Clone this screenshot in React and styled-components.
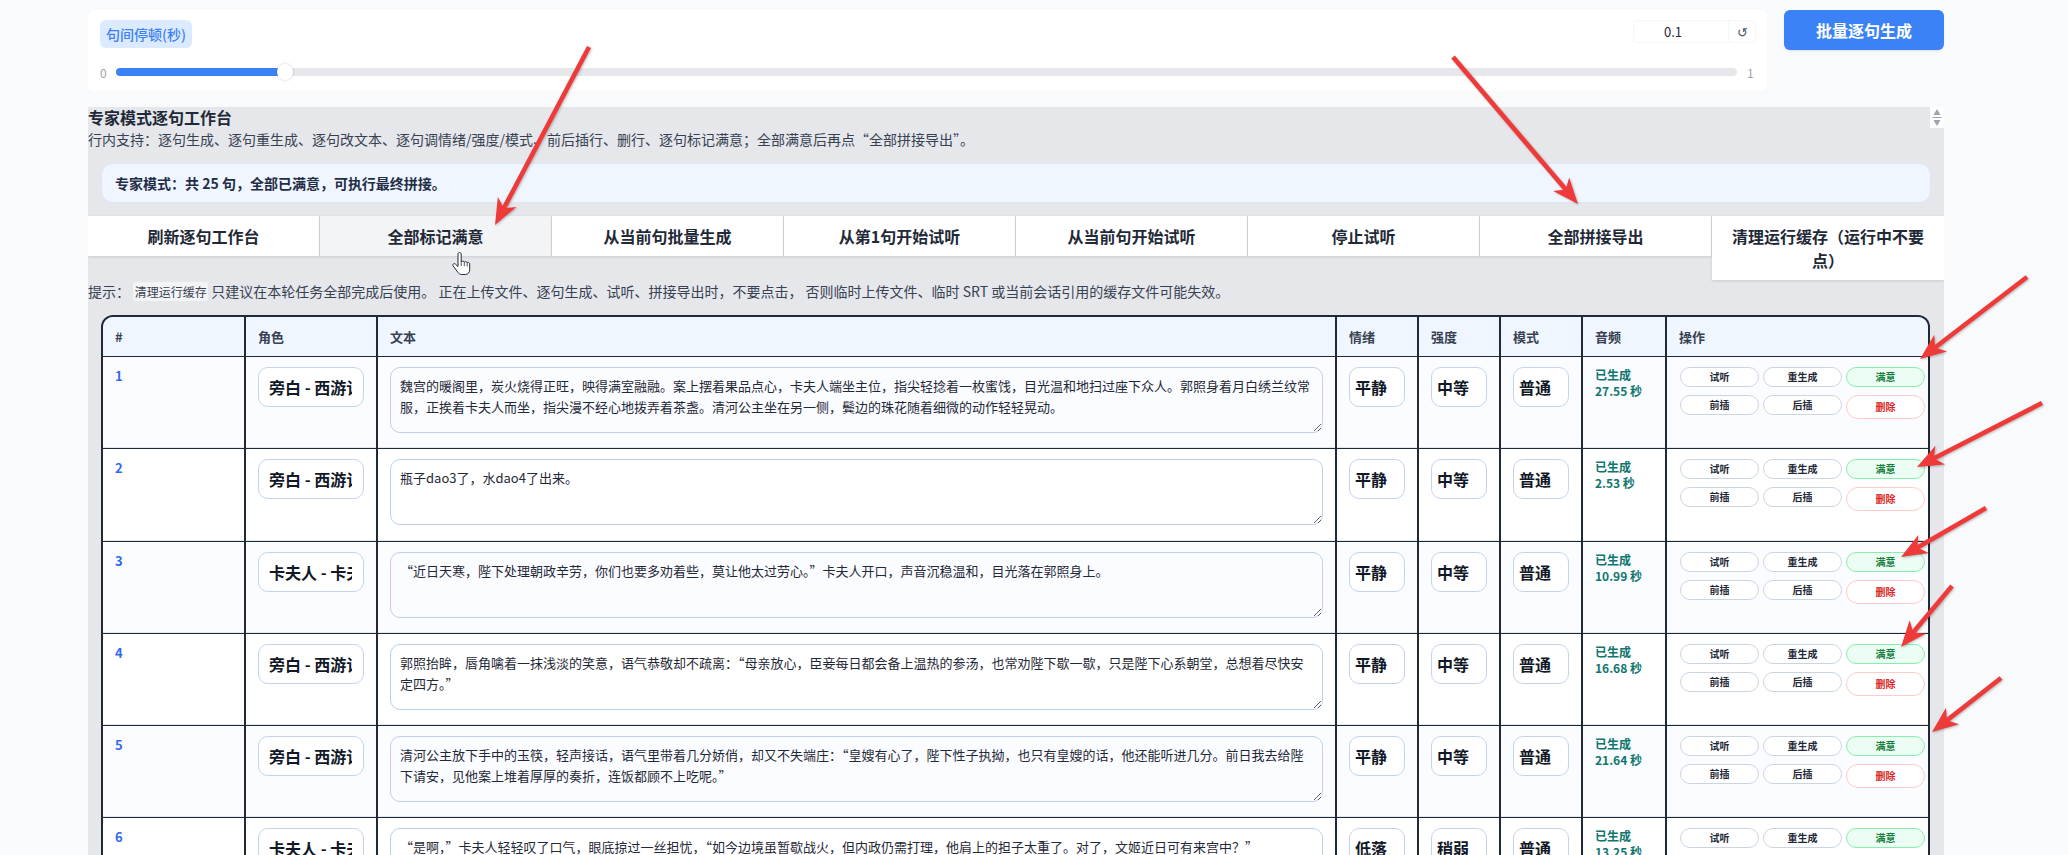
import React from 'react';
import styled, { createGlobalStyle } from 'styled-components';

const FONT = '"Noto Sans CJK SC", "Noto Sans", sans-serif';

const TOOLBAR = [
  '刷新逐句工作台',
  '全部标记满意',
  '从当前句批量生成',
  '从第1句开始试听',
  '从当前句开始试听',
  '停止试听',
  '全部拼接导出',
  '清理运行缓存（运行中不要点）',
];

const COLUMNS = [
  { title: '#', width: 143 },
  { title: '角色', width: 132 },
  { title: '文本', width: 959 },
  { title: '情绪', width: 82 },
  { title: '强度', width: 82 },
  { title: '模式', width: 82 },
  { title: '音频', width: 84 },
  { title: '操作', width: 261 },
];

const NARRATOR = '旁白 - 西游记旁白';
const KAFUREN = '卡夫人 - 卡夫人';

const ROWS = [
  {
    id: 1,
    role: NARRATOR,
    text: '魏宫的暖阁里，炭火烧得正旺，映得满室融融。案上摆着果品点心，卡夫人端坐主位，指尖轻捻着一枚蜜饯，目光温和地扫过座下众人。郭照身着月白绣兰纹常服，正挨着卡夫人而坐，指尖漫不经心地拨弄着茶盏。清河公主坐在另一侧，鬓边的珠花随着细微的动作轻轻晃动。',
    emotion: '平静',
    strength: '中等',
    seconds: '27.55',
  },
  {
    id: 2,
    role: NARRATOR,
    text: '瓶子dao3了，水dao4了出来。',
    emotion: '平静',
    strength: '中等',
    seconds: '2.53',
  },
  {
    id: 3,
    role: KAFUREN,
    text: '“近日天寒，陛下处理朝政辛劳，你们也要多劝着些，莫让他太过劳心。”卡夫人开口，声音沉稳温和，目光落在郭照身上。',
    emotion: '平静',
    strength: '中等',
    seconds: '10.99',
  },
  {
    id: 4,
    role: NARRATOR,
    text: '郭照抬眸，唇角噙着一抹浅淡的笑意，语气恭敬却不疏离：“母亲放心，臣妾每日都会备上温热的参汤，也常劝陛下歇一歇，只是陛下心系朝堂，总想着尽快安定四方。”',
    emotion: '平静',
    strength: '中等',
    seconds: '16.68',
  },
  {
    id: 5,
    role: NARRATOR,
    text: '清河公主放下手中的玉筷，轻声接话，语气里带着几分娇俏，却又不失端庄：“皇嫂有心了，陛下性子执拗，也只有皇嫂的话，他还能听进几分。前日我去给陛下请安，见他案上堆着厚厚的奏折，连饭都顾不上吃呢。”',
    emotion: '平静',
    strength: '中等',
    seconds: '21.64',
  },
  {
    id: 6,
    role: KAFUREN,
    text: '“是啊，”卡夫人轻轻叹了口气，眼底掠过一丝担忧，“如今边境虽暂歇战火，但内政仍需打理，他肩上的担子太重了。对了，文姬近日可有来宫中？”',
    emotion: '低落',
    strength: '稍弱',
    seconds: '13.25',
  },
];

const ARROWS = [
  [589, 47, 495, 225],
  [1453, 57, 1578, 204],
  [2027, 277, 1920, 359],
  [2042, 403, 1917, 467],
  [1986, 508, 1901, 557],
  [1952, 586, 1901, 647],
  [2001, 678, 1932, 732],
];

const Arrow = ({ from, to }) => {
  const [x1, y1] = from;
  const [x2, y2] = to;
  const length = Math.hypot(x2 - x1, y2 - y1);
  const ux = (x2 - x1) / length;
  const uy = (y2 - y1) / length;
  const point = (back, side) =>
    `${x2 - ux * back - uy * side},${y2 - uy * back + ux * side}`;
  return (
    <ArrowShape>
      <line x1={x1} y1={y1} x2={x2 - ux * 12} y2={y2 - uy * 12} stroke="#ef3a3a" strokeWidth="4.6" />
      <polygon points={[point(0, 0), point(26, 10.5), point(19, 0), point(26, -10.5)].join(' ')} fill="#ef3a3a" />
    </ArrowShape>
  );
};

const App = () => {
  return (
    <>
      <GlobalStyle />
      <Page>
        <TopRow>
          <SliderCard>
            <SliderHead>
              <SliderLabel>句间停顿(秒)</SliderLabel>
              <NumberBox>
                <NumberInput defaultValue="0.1" />
                <ResetButton>↺</ResetButton>
              </NumberBox>
            </SliderHead>
            <SliderRow>
              <RangeEnd>0</RangeEnd>
              <Track>
                <Fill $percent={10} />
                <Thumb $percent={10} />
              </Track>
              <RangeEnd>1</RangeEnd>
            </SliderRow>
          </SliderCard>
          <PrimaryButton>批量逐句生成</PrimaryButton>
        </TopRow>

        <Panel>
          <Spinner viewBox="0 0 14 21">
            <path d="M7 2 L10.5 8 H3.5 Z" fill="#9ca3af" />
            <rect x="2.5" y="10" width="9" height="1" fill="#9ca3af" />
            <path d="M3.5 13 H10.5 L7 19 Z" fill="#9ca3af" />
          </Spinner>
          <PanelTitle>专家模式逐句工作台</PanelTitle>
          <PanelNote>
            行内支持：逐句生成、逐句重生成、逐句改文本、逐句调情绪/强度/模式、前后插行、删行、逐句标记满意；全部满意后再点“全部拼接导出”。
          </PanelNote>
          <InfoBox>专家模式：共 25 句，全部已满意，可执行最终拼接。</InfoBox>
          <Toolbar>
            {TOOLBAR.map((label, index) => (
              <ToolButton key={label} $hovered={index === 1}>
                {label}
              </ToolButton>
            ))}
          </Toolbar>
          <Hint>
            提示： <HintCode>清理运行缓存</HintCode> 只建议在本轮任务全部完成后使用。 正在上传文件、逐句生成、试听、拼接导出时，不要点击， 否则临时上传文件、临时 SRT 或当前会话引用的缓存文件可能失效。
          </Hint>

          <TableWrap>
            <Table>
              <colgroup>
                {COLUMNS.map((col) => (
                  <col key={col.title} width={col.width} />
                ))}
              </colgroup>
              <thead>
                <tr>
                  {COLUMNS.map((col) => (
                    <HeadCell key={col.title}>{col.title}</HeadCell>
                  ))}
                </tr>
              </thead>
              <tbody>
                {ROWS.map((row) => (
                  <Row key={row.id}>
                    <Cell>
                      <RowNumber>{row.id}</RowNumber>
                    </Cell>
                    <Cell>
                      <RoleSelect defaultValue={row.role}>
                        <option>{row.role}</option>
                      </RoleSelect>
                    </Cell>
                    <Cell>
                      <TextBox defaultValue={row.text} />
                    </Cell>
                    <Cell>
                      <TagSelect defaultValue={row.emotion}>
                        <option>{row.emotion}</option>
                      </TagSelect>
                    </Cell>
                    <Cell>
                      <TagSelect defaultValue={row.strength}>
                        <option>{row.strength}</option>
                      </TagSelect>
                    </Cell>
                    <Cell>
                      <TagSelect defaultValue="普通">
                        <option>普通</option>
                      </TagSelect>
                    </Cell>
                    <Cell>
                      <AudioStatus>
                        已生成
                        <br />
                        {row.seconds} 秒
                      </AudioStatus>
                    </Cell>
                    <ActionCell>
                      <Actions>
                        <PillButton>试听</PillButton>
                        <PillButton>重生成</PillButton>
                        <PillButton $kind="ok">满意</PillButton>
                        <PillButton>前插</PillButton>
                        <PillButton>后插</PillButton>
                        <PillButton $kind="danger">删除</PillButton>
                      </Actions>
                    </ActionCell>
                  </Row>
                ))}
              </tbody>
            </Table>
          </TableWrap>
        </Panel>

        <Overlay viewBox="0 0 2068 855">
          {ARROWS.map(([x1, y1, x2, y2]) => (
            <Arrow key={`${x1}-${y1}`} from={[x1, y1]} to={[x2, y2]} />
          ))}
          <g transform="translate(452 252)" fill="#fff" stroke="#1f2937" strokeWidth="1" strokeLinejoin="round">
            <path d="M6 2.2c0-1 .7-1.7 1.6-1.7s1.6.7 1.6 1.7V10c.3-.6.9-.9 1.5-.9.8 0 1.4.5 1.6 1.1.3-.4.8-.6 1.3-.6.8 0 1.4.5 1.6 1.2.3-.3.7-.4 1.1-.4.8 0 1.4.8 1.4 1.7v5.5c0 2.7-1.7 4.9-4.4 4.9H9.5c-1.5 0-2.5-.7-3.4-1.9L1.2 14c-.5-.7-.4-1.6.2-2.1.6-.5 1.5-.4 2 .2L6 14.5z" />
            <path d="M9.2 10v4M12.3 10.2v4M15.2 11v3.5" fill="none" strokeWidth="0.8" />
          </g>
        </Overlay>
      </Page>
    </>
  );
};

const GlobalStyle = createGlobalStyle`
  html, body {
    margin: 0;
    height: 100%;
    overflow: hidden;
    background: #f9fafb;
    font-family: ${FONT};
  }
  * {
    box-sizing: border-box;
  }
`;

const Page = styled.div`
  position: relative;
  width: 2068px;
  height: 855px;
  padding: 10px 124px 0 88px;
  display: flex;
  flex-direction: column;
  gap: 16px;
  overflow: hidden;
`;

const TopRow = styled.div`
  display: flex;
  align-items: flex-start;
  gap: 17px;
`;

const SliderCard = styled.div`
  flex: 1;
  height: 81px;
  padding: 10px 11px 0 12px;
  background: #fff;
  border-radius: 7px;
`;

const SliderHead = styled.div`
  display: flex;
  justify-content: space-between;
  align-items: flex-start;
`;

const SliderLabel = styled.span`
  padding: 0 6px;
  height: 28px;
  line-height: 28px;
  font-size: 14px;
  font-weight: 500;
  color: #3b82f6;
  background: #dbeafe;
  border-radius: 6px;
`;

const NumberBox = styled.div`
  display: flex;
  width: 123px;
  height: 23px;
  border: 1px solid #f5f6f8;
  border-radius: 4px;
`;

const NumberInput = styled.input`
  width: 95px;
  padding: 0 16px 0 0;
  border: 0;
  border-right: 1px solid #f5f6f8;
  outline: none;
  background: transparent;
  text-align: center;
  font-family: ${FONT};
  font-size: 13px;
  color: #1f2937;
`;

const ResetButton = styled.span`
  flex: 1;
  text-align: center;
  font-size: 13px;
  line-height: 21px;
  color: #4b5563;
`;

const SliderRow = styled.div`
  display: flex;
  align-items: center;
  height: 20px;
  margin-top: 14px;
`;

const RangeEnd = styled.span`
  width: 6px;
  font-size: 12px;
  color: #9ca3af;
  &:first-child {
    margin-right: 10px;
  }
  &:last-child {
    margin: 0 3px 0 10px;
  }
`;

const Track = styled.div`
  position: relative;
  flex: 1;
  height: 8px;
  border-radius: 4px;
  background: #e5e7eb;
`;

const Fill = styled.div`
  width: ${({ $percent }) => $percent}%;
  height: 100%;
  border-radius: 4px 0 0 4px;
  background: #3b82f6;
`;

const Thumb = styled.div`
  position: absolute;
  top: -4px;
  left: calc(${({ $percent }) => $percent}% - 1px);
  width: 16px;
  height: 16px;
  border-radius: 50%;
  background: #fff;
  box-shadow: 0 0 3px rgba(0, 0, 0, 0.2);
`;

const PrimaryButton = styled.button`
  width: 160px;
  height: 40px;
  border: 0;
  border-radius: 6px;
  background: #3b82f6;
  color: #fff;
  font-family: ${FONT};
  font-size: 16px;
  font-weight: 700;
  box-shadow: 0 1px 2px rgba(0, 0, 0, 0.1);
`;

const Panel = styled.section`
  position: relative;
  flex: 1;
  min-height: 0;
  background: #e5e7eb;
  overflow: hidden;
`;

const Spinner = styled.svg`
  position: absolute;
  top: 0;
  right: 0;
  width: 14px;
  height: 21px;
  background: #fff;
`;

const PanelTitle = styled.h3`
  margin: 0;
  font-size: 16px;
  line-height: 20px;
  font-weight: 700;
  color: #1f2937;
`;

const PanelNote = styled.p`
  margin: 1px 0 0;
  font-size: 14px;
  line-height: 22px;
  color: #374151;
`;

const InfoBox = styled.div`
  margin: 13px 13px 0;
  height: 40px;
  padding: 0 13px;
  line-height: 38px;
  font-size: 14px;
  font-weight: 600;
  color: #1f2d45;
  background: #f0f6ff;
  border: 1px solid #dbe7f7;
  border-radius: 12px;
`;

const Toolbar = styled.div`
  display: grid;
  grid-template-columns: repeat(8, 1fr);
  align-items: start;
  height: 64px;
  margin-top: 13px;
`;

const ToolButton = styled.button`
  min-height: 40px;
  padding: 8px 16px;
  border: 0;
  border-right: 1px solid #d6d8dc;
  background: ${({ $hovered }) => ($hovered ? '#f3f4f6' : '#fff')};
  color: #1f2937;
  font-family: ${FONT};
  font-size: 16px;
  font-weight: 600;
  line-height: 24px;
  box-shadow: 0 1px 3px rgba(0, 0, 0, 0.12);
  &:last-child {
    border-right: 0;
  }
`;

const Hint = styled.p`
  margin: -1px 0 0;
  font-size: 14px;
  line-height: 24px;
  color: #374151;
`;

const HintCode = styled.code`
  padding: 1px 1.5px;
  font-family: ${FONT};
  font-size: 12px;
  background: #f3f4f6;
  border-radius: 2px;
`;

const TableWrap = styled.div`
  margin: 11px 14px 0 13px;
  border: 2px solid #1f2937;
  border-bottom: 0;
  border-radius: 12px 12px 0 0;
  overflow: hidden;
`;

const Table = styled.table`
  width: 100%;
  table-layout: fixed;
  border-collapse: separate;
  border-spacing: 0;
`;

const HeadCell = styled.th`
  height: 40px;
  padding: 0 12px;
  text-align: left;
  font-size: 13px;
  font-weight: 600;
  color: #374151;
  background: #eff6ff;
  border-right: 2px solid #1f2937;
  border-bottom: 1px solid #1f2937;
  &:last-child {
    border-right: 0;
  }
`;

const Row = styled.tr`
  height: 92.25px;
  background: #fff;
  &:nth-child(odd) {
    background: #fbfcff;
  }
`;

const Cell = styled.td`
  padding: 10px 12px 0;
  vertical-align: top;
  border-right: 2px solid #1f2937;
  border-bottom: 1px solid #1f2937;
  box-shadow: inset 0 -1px 0 #e2e8f0;
`;

const ActionCell = styled(Cell)`
  padding: 10px 3px 0 13px;
  border-right: 0;
`;

const RowNumber = styled.div`
  font-size: 13px;
  font-weight: 700;
  line-height: 18px;
  color: #2f6bf0;
`;

const RoleSelect = styled.select`
  display: block;
  width: 106px;
  height: 40px;
  padding: 0 11px 0 10px;
  appearance: none;
  background: #fff;
  border: 1px solid #c3d4ec;
  border-radius: 10px;
  outline: none;
  font-family: ${FONT};
  font-size: 16px;
  font-weight: 700;
  color: #111827;
`;

const TagSelect = styled(RoleSelect)`
  width: 56px;
  padding: 0 4px 0 5px;
`;

const TextBox = styled.textarea`
  display: block;
  width: 933px;
  height: 66px;
  padding: 8px 9px;
  background: transparent;
  border: 1px solid #bcd0ea;
  border-radius: 10px;
  outline: none;
  font-family: ${FONT};
  font-size: 13px;
  line-height: 20.8px;
  color: #1f2937;
`;

const AudioStatus = styled.div`
  font-size: 12px;
  font-weight: 600;
  line-height: 16px;
  color: #0f766e;
`;

const Actions = styled.div`
  display: grid;
  grid-template-columns: repeat(3, 1fr);
  align-items: start;
  gap: 8px 4px;
`;

const PillButton = styled.button`
  height: ${({ $kind }) => ($kind === 'danger' ? '24px' : '20px')};
  padding: 0;
  border: 1px solid
    ${({ $kind }) =>
      $kind === 'ok' ? '#86efac' : $kind === 'danger' ? '#fecaca' : '#cbd5e1'};
  border-radius: 999px;
  background: ${({ $kind }) => ($kind === 'ok' ? '#ecfdf3' : '#fff')};
  color: ${({ $kind }) =>
    $kind === 'ok' ? '#15803d' : $kind === 'danger' ? '#dc2626' : '#1f2937'};
  font-family: ${FONT};
  font-size: 10px;
  font-weight: 600;
  line-height: 1;
`;

const Overlay = styled.svg`
  position: absolute;
  top: 0;
  left: 0;
  width: 2068px;
  height: 855px;
  pointer-events: none;
`;

const ArrowShape = styled.g`
  filter: drop-shadow(1px 1px 1px rgba(0, 0, 0, 0.25));
`;

export default App;
